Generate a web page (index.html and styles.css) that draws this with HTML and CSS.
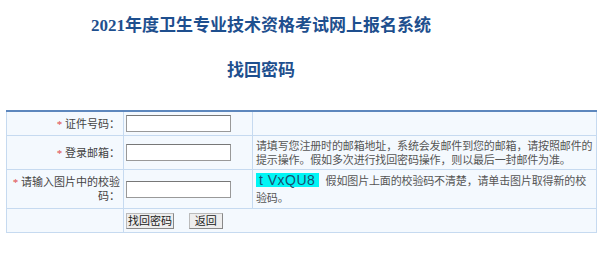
FILE: index.html
```html
<!DOCTYPE html>
<html lang="zh-CN">
<head>
    <meta charset="UTF-8">
    <title>找回密码</title>
    <link rel="stylesheet" href="styles.css">
</head>
<body>
    <div class="header">
        <h1>2021年度卫生专业技术资格考试网上报名系统</h1>
        <h2>找回密码</h2>
    </div>

    <table class="form-table">
        <tr class="row-id">
            <td class="label"><span class="star">*</span> 证件号码：</td>
            <td class="field"><input type="text"></td>
            <td class="tip"></td>
        </tr>
        <tr class="row-mail">
            <td class="label"><span class="star">*</span> 登录邮箱：</td>
            <td class="field"><input type="text"></td>
            <td class="tip">请填写您注册时的邮箱地址，系统会发邮件到您的邮箱，请按照邮件的提示操作。假如多次进行找回密码操作，则以最后一封邮件为准。</td>
        </tr>
        <tr class="row-code">
            <td class="label"><span class="star">*</span> 请输入图片中的校验码：</td>
            <td class="field"><input type="text"></td>
            <td class="tip"><span class="captcha">t VxQU8</span> 假如图片上面的校验码不清楚，请单击图片取得新的校验码。</td>
        </tr>
        <tr class="row-btn">
            <td></td>
            <td colspan="2" class="buttons">
                <button>找回密码</button>
                <button class="back">返回</button>
            </td>
        </tr>
    </table>
</body>
</html>
```

FILE: styles.css
```css
body {
    margin: 0;
    padding: 0;
    background: #fff;
    font-family: "Liberation Serif", "Noto Sans CJK SC", serif;
}

.header {
    width: 522px;
    text-align: center;
    color: #1e4f8e;
}

.header h1 {
    margin: 0;
    padding-top: 15px;
    font-size: 17px;
    line-height: 21px;
    font-weight: bold;
}

.header h2 {
    margin: 0;
    padding-top: 24px;
    font-size: 17px;
    line-height: 21px;
    font-weight: bold;
}

.form-table {
    margin: 29px 0 0 6px;
    width: 591px;
    border-collapse: collapse;
    background: #f4f9fe;
    border-top: 2px solid #5d87bd;
    font-size: 11px;
    color: #444;
}

.form-table td {
    border: 1px solid #c6daf0;
    padding: 0 3px;
}

.label {
    width: 110px;
    text-align: right;
    line-height: 14px;
}

.star {
    color: #e04a4a;
}

.field {
    width: 124px;
}

.form-table .field {
    padding: 0 2px;
}

.field input {
    display: block;
    width: 101px;
    height: 13px;
    padding: 1px;
    border: 1px solid #999;
    border-top-color: #777;
    background: #fff;
}

.tip {
    line-height: 14px;
    color: #555;
    letter-spacing: -0.15px;
}

.form-table .tip {
    padding: 1px 0 1px 3px;
}

.row-id td { height: 21px; }
.row-mail td { height: 31px; }
.row-code td { height: 34px; }
.row-btn td { height: 23px; }

.form-table .row-code .tip {
    vertical-align: top;
    padding-top: 3px;
    line-height: 17px;
}

.captcha {
    display: inline-block;
    vertical-align: top;
    background: #00f5f5;
    color: #1a5070;
    font-family: "Liberation Sans", sans-serif;
    font-size: 14px;
    line-height: 14px;
    width: 60px;
    padding-left: 3px;
    margin-right: 4px;
    letter-spacing: 0.5px;
}

.form-table .buttons {
    padding: 0 2px;
}

.buttons button {
    font-family: "Noto Sans CJK SC", sans-serif;
    font-size: 11px;
    line-height: 13px;
    padding: 0 1px;
    height: 16px;
    background: #eee;
    border: 1px solid #bbb;
    border-right-color: #888;
    border-bottom-color: #888;
    color: #222;
    vertical-align: middle;
}

.buttons .back {
    margin-left: 12px;
    padding: 0 5px;
}
```
